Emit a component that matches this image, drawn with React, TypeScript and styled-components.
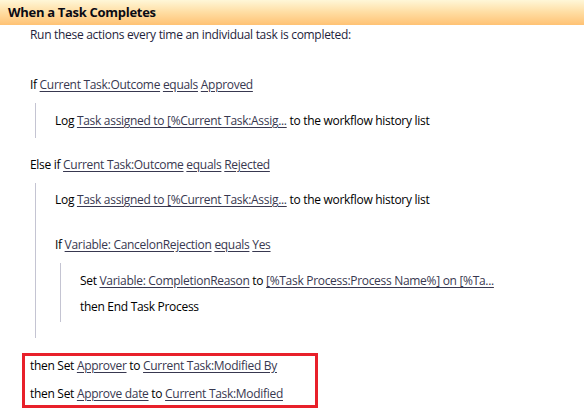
import React from 'react';
import styled, { createGlobalStyle } from 'styled-components';

const GlobalStyle = createGlobalStyle`
  html, body {
    margin: 0;
    padding: 0;
    background: #ffffff;
  }
  body {
    font-family: 'Open Sans', 'Noto Sans', sans-serif;
    font-size: 12px;
    letter-spacing: -0.3px;
    color: #000000;
  }
`;

type Part = string | { link: string };

const App: React.FC = () => {
  const renderParts = (parts: Part[]) =>
    parts.map((p, i) =>
      typeof p === 'string' ? (
        <span key={i}>{p}</span>
      ) : (
        <Link key={i}>{p.link}</Link>
      )
    );

  return (
    <Page>
      <GlobalStyle />
      <Header>When a Task Completes</Header>
      <Body>
        <Description>
          Run these actions every time an individual task is completed:
        </Description>

        <Row top={28}>
          {renderParts(['If ', { link: 'Current Task:Outcome' }, ' ', { link: 'equals' }, ' ', { link: 'Approved' }])}
        </Row>
        <Branch top={5} padTop={5} padBottom={4}>
          <Row>
            {renderParts(['Log ', { link: 'Task assigned to [%Current Task:Assig...' }, ' to the workflow history list'])}
          </Row>
        </Branch>

        <Row top={14}>
          {renderParts(['Else if ', { link: 'Current Task:Outcome' }, ' ', { link: 'equals' }, ' ', { link: 'Rejected' }])}
        </Row>
        <Branch top={5} padTop={4} padBottom={16}>
          <Row>
            {renderParts(['Log ', { link: 'Task assigned to [%Current Task:Assig...' }, ' to the workflow history list'])}
          </Row>
          <Row top={19}>
            {renderParts(['If ', { link: 'Variable: CancelonRejection' }, ' ', { link: 'equals' }, ' ', { link: 'Yes' }])}
          </Row>
          <Branch top={5} padTop={5} padBottom={2}>
            <Row>
              {renderParts(['Set ', { link: 'Variable: CompletionReason' }, ' to ', { link: '[%Task Process:Process Name%] on [%Ta...' }])}
            </Row>
            <Row>then End Task Process</Row>
          </Branch>
        </Branch>

        <Highlight>
          <BoxRow>
            {renderParts(['then Set ', { link: 'Approver' }, ' to ', { link: 'Current Task:Modified By' }])}
          </BoxRow>
          <BoxRow>
            {renderParts(['then Set ', { link: 'Approve date' }, ' to ', { link: 'Current Task:Modified' }])}
          </BoxRow>
        </Highlight>
      </Body>
    </Page>
  );
};

export default App;

const Page = styled.div`
  width: 584px;
  height: 412px;
  overflow: hidden;
  background: #ffffff;
`;

const Header = styled.div`
  height: 25px;
  line-height: 25px;
  padding-left: 8px;
  font-size: 13px;
  font-weight: bold;
  letter-spacing: -0.3px;
  color: #0a0a14;
  background: linear-gradient(to bottom, #fff7d8 0%, #ffdda2 50%, #ffc274 100%);
`;

const Body = styled.div`
  padding-left: 30px;
`;

const Description = styled.div`
  margin-top: 1px;
  height: 18px;
  line-height: 18px;
  color: #1e1e3c;
`;

const Row = styled.div<{ top?: number }>`
  margin-top: ${(p) => p.top ?? 0}px;
  height: 26px;
  line-height: 26px;
  white-space: nowrap;
  color: #000000;
`;

const Branch = styled.div<{ top: number; padTop: number; padBottom: number }>`
  margin-top: ${(p) => p.top}px;
  margin-left: 5px;
  padding: ${(p) => p.padTop}px 0 ${(p) => p.padBottom}px 19px;
  border-left: 1px solid #c4c4d2;
`;

const Link = styled.span`
  color: #383850;
  text-decoration: underline;
  text-underline-offset: 2px;
`;

const Highlight = styled.div`
  margin-top: 15px;
  margin-left: -8px;
  width: 285px;
  padding: 0 0 1px 5px;
  border: 3px solid #e8202a;
  display: flex;
  flex-direction: column;
  gap: 8px;
`;

const BoxRow = styled.div`
  height: 20px;
  line-height: 20px;
  white-space: nowrap;
`;
